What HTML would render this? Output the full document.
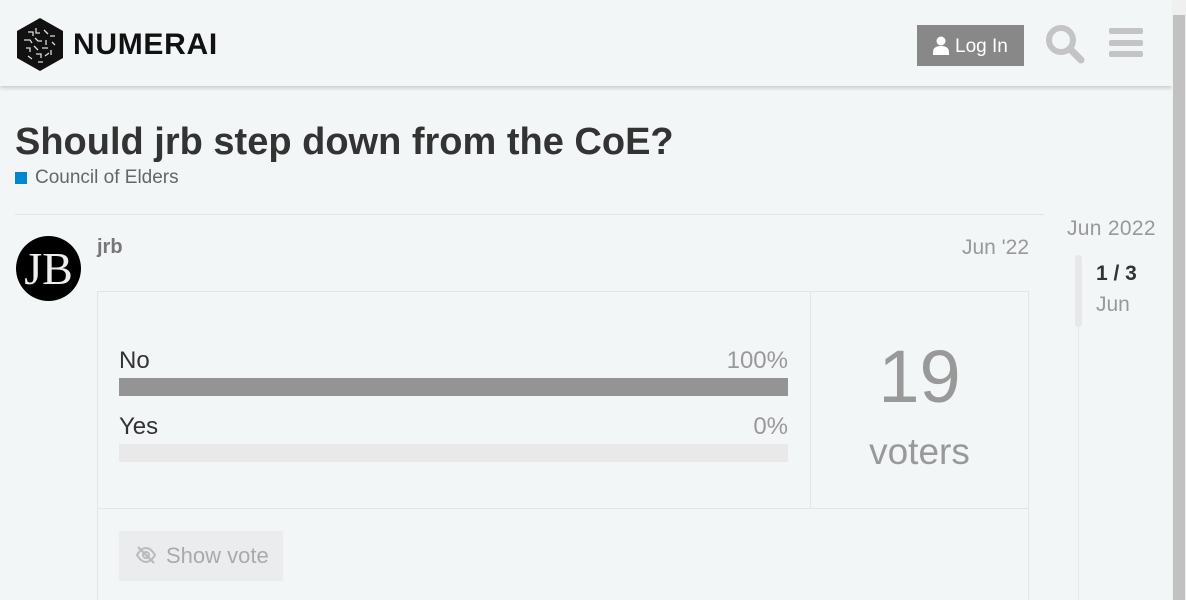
<!DOCTYPE html>
<html style="overflow:hidden;height:600px"><head><style>
body{margin:0;width:1186px;height:600px;overflow:hidden;background:#f3f6f7;font-family:"Liberation Sans",sans-serif;position:relative}
.abs{position:absolute}
</style></head><body>
<div class="abs" style="left:0;top:0;width:1172px;height:86px;background:#f3f6f7;box-shadow:0 2px 4px rgba(0,0,0,0.18)"></div>
<svg class="abs" style="left:16px;top:18px" width="48" height="53" viewBox="0 0 48 53"><polygon points="24,0 47,13 47,40 24,53 1,40 1,13" fill="#111"/><g stroke="#ddd" stroke-width="1.3" fill="none"><path d="M12 14h5v4M20 10v5h4M28 12l4 4M34 18h5M8 22h6l2 3M19 20l3 3h4M30 22v5M36 24l3 3M10 30h4v4M18 28l4 4M26 30h6M35 32v5M12 38l4 3M20 36h5v4M29 38l4-3M22 44h5"/></g></svg>
<div class="abs" style="left:73px;top:28px;font-size:30px;font-weight:bold;color:#111;letter-spacing:0.7px">NUMERAI</div>
<div class="abs" style="left:917px;top:25px;width:107px;height:41px;background:#888;color:#fff;font-size:19px;line-height:41px"><svg class="abs" style="left:15px;top:11px" width="18" height="19" viewBox="0 0 18 19"><circle cx="9" cy="5" r="4.5" fill="#fff"/><path d="M1 19v-3c0-4 3-6 8-6s8 2 8 6v3z" fill="#fff"/></svg><span class="abs" style="left:38px;top:1px">Log In</span></div>
<svg class="abs" style="left:1045px;top:24px" width="40" height="40" viewBox="0 0 40 40"><circle cx="16" cy="16" r="12" stroke="#c4c4c4" stroke-width="6" fill="none"/><path d="M25 25l11 11" stroke="#c4c4c4" stroke-width="7" stroke-linecap="round"/></svg>
<div class="abs" style="left:1109px;top:28px;width:34px;height:6px;background:#c4c4c4;border-radius:2px"></div>
<div class="abs" style="left:1109px;top:40px;width:34px;height:6px;background:#c4c4c4;border-radius:2px"></div>
<div class="abs" style="left:1109px;top:51px;width:34px;height:6px;background:#c4c4c4;border-radius:2px"></div>
<div class="abs" style="left:1172px;top:0;width:14px;height:600px;background:#f0f0f0"></div>
<div class="abs" style="left:1173px;top:15px;width:12px;height:585px;background:#c1c1c1"></div>
<div class="abs" style="left:15px;top:121px;font-size:38px;font-weight:bold;color:#333">Should jrb step down from the CoE?</div>
<div class="abs" style="left:15px;top:172px;width:12px;height:12px;background:#0088cc"></div>
<div class="abs" style="left:35px;top:167px;font-size:19px;color:#666">Council of Elders</div>
<div class="abs" style="left:15px;top:214px;width:1029px;height:1px;background:#e2e4e5"></div>
<div class="abs" style="left:16px;top:236px;width:65px;height:65px;border-radius:50%;background:#000;color:#eee;font-family:'Liberation Serif',serif;font-size:46px;text-align:center;line-height:65px">JB</div>
<div class="abs" style="left:97px;top:236px;font-size:20px;font-weight:bold;color:#777">jrb</div>
<div class="abs" style="left:929px;top:236px;width:100px;text-align:right;font-size:21px;color:#999">Jun '22</div>
<div class="abs" style="left:97px;top:291px;width:930px;height:320px;border:1px solid #e3e5e6"></div>
<div class="abs" style="left:810px;top:291px;width:1px;height:217px;background:#e3e5e6"></div>
<div class="abs" style="left:97px;top:508px;width:932px;height:1px;background:#e3e5e6"></div>
<div class="abs" style="left:119px;top:347px;font-size:24px;color:#333">No</div>
<div class="abs" style="left:688px;top:347px;width:100px;text-align:right;font-size:24px;color:#999">100%</div>
<div class="abs" style="left:119px;top:378px;width:669px;height:18px;background:#949494"></div>
<div class="abs" style="left:119px;top:413px;font-size:24px;color:#333">Yes</div>
<div class="abs" style="left:688px;top:413px;width:100px;text-align:right;font-size:24px;color:#999">0%</div>
<div class="abs" style="left:119px;top:444px;width:669px;height:18px;background:#e9e9e9"></div>
<div class="abs" style="left:811px;top:334px;width:217px;text-align:center;font-size:74px;color:#999">19</div>
<div class="abs" style="left:811px;top:431px;width:217px;text-align:center;font-size:37px;color:#999">voters</div>
<div class="abs" style="left:119px;top:531px;width:164px;height:50px;background:#ebeced"></div>
<svg class="abs" style="left:135px;top:545px" width="22" height="20" viewBox="0 0 22 20"><path d="M2 10c3-5 6-7 9-7s6 2 9 7c-3 5-6 7-9 7s-6-2-9-7z" stroke="#bbb" stroke-width="2" fill="none"/><circle cx="11" cy="10" r="3" stroke="#bbb" stroke-width="2" fill="none"/><path d="M3 2l16 16" stroke="#bbb" stroke-width="2.2"/></svg>
<div class="abs" style="left:166px;top:543px;font-size:22px;color:#aaa">Show vote</div>
<div class="abs" style="left:1067px;top:217px;font-size:21px;color:#999;letter-spacing:0.3px">Jun 2022</div>
<div class="abs" style="left:1078px;top:255px;width:1px;height:345px;background:#e8e8e8"></div>
<div class="abs" style="left:1075px;top:255px;width:7px;height:72px;background:#e8e8e8;border-radius:3px"></div>
<div class="abs" style="left:1096px;top:262px;font-size:21px;font-weight:bold;color:#333">1 / 3</div>
<div class="abs" style="left:1096px;top:293px;font-size:21px;color:#999">Jun</div>
</body></html>
